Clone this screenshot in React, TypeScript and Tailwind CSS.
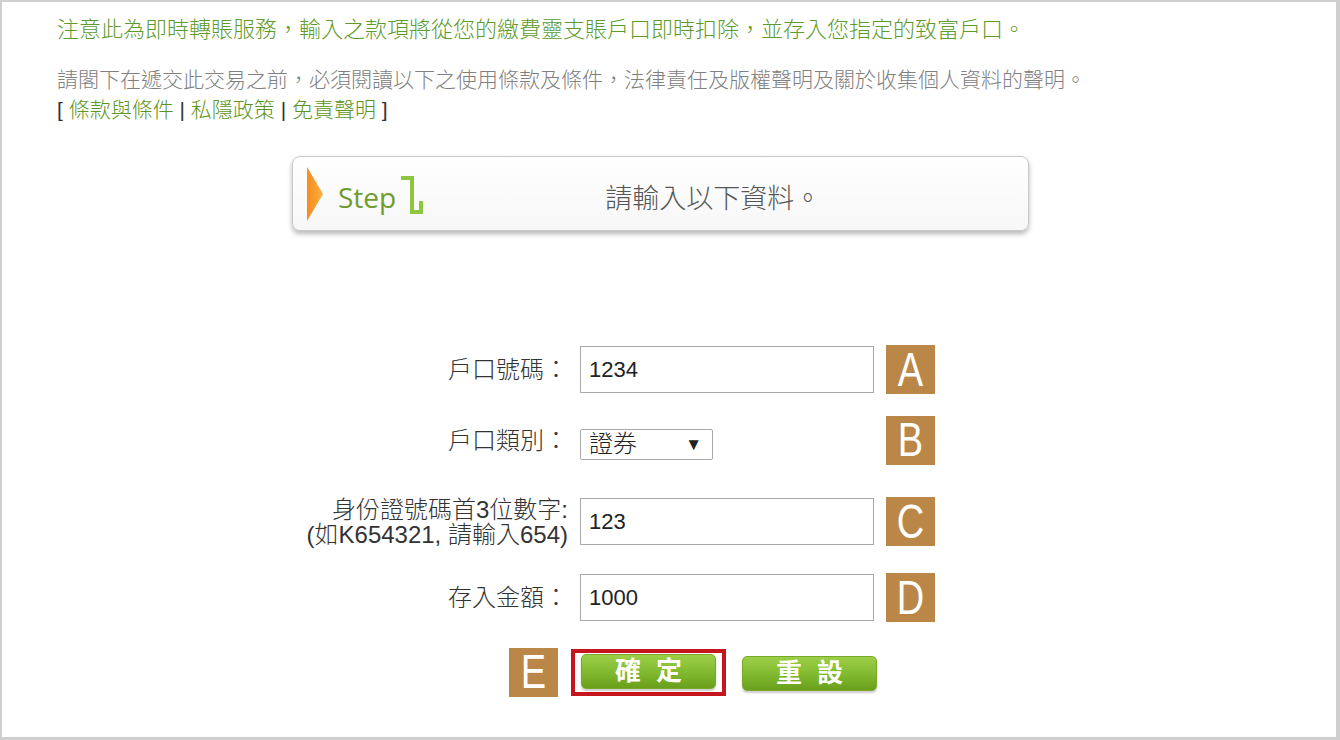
const cjk = { fontFamily: '"Liberation Sans", "Noto Sans CJK TC", sans-serif' };

const Badge: React.FC<{ letter: string }> = ({ letter }) => (
  <div className="flex h-[49px] w-[49px] shrink-0 items-center justify-center bg-[#bb8748] text-white">
    <span className="scale-y-[1.25] text-[38px] font-light leading-none" style={cjk}>
      {letter}
    </span>
  </div>
);

const GreenButton: React.FC<{ a: string; b: string }> = ({ a, b }) => (
  <button className="flex h-[35px] w-[135px] items-center justify-center gap-[15px] rounded-[5px] border border-[#7aa82a] bg-gradient-to-b from-[#9ccf48] via-[#82bb30] to-[#6a9f1c] text-[26px] font-bold leading-none text-white shadow-[0_2px_2px_rgba(0,0,0,0.2)]">
    <span>{a}</span>
    <span>{b}</span>
  </button>
);

const StepBox: React.FC = () => (
  <div className="ml-[290px] flex h-[75px] w-[737px] items-center rounded-[8px] border border-[#c9c9c9] bg-gradient-to-b from-white to-[#f7f7f7] shadow-[0_3px_5px_rgba(0,0,0,0.28)]">
    <svg width="16" height="54" viewBox="0 0 16 54" className="ml-[14px]">
      <defs>
        <linearGradient id="tri" x1="0" y1="0" x2="1" y2="0">
          <stop offset="0" stopColor="#f68b1f" />
          <stop offset="1" stopColor="#fbb040" />
        </linearGradient>
      </defs>
      <polygon points="0,0 16,27 0,54" fill="url(#tri)" />
    </svg>
    <span
      className="ml-[15px] mt-[6px] text-[28px] leading-none text-[#6f9b2f]"
      style={{ fontFamily: '"Open Sans", sans-serif' }}
    >
      Step
    </span>
    <svg width="26" height="42" viewBox="0 0 26 42" className="ml-[3px] mt-[2px]">
      <g fill="#8dc63f">
        <rect x="2" y="2" width="13" height="4" />
        <rect x="11" y="2" width="4" height="38" />
        <rect x="11" y="36" width="13" height="4" />
        <rect x="20" y="27" width="4" height="13" />
      </g>
    </svg>
    <span className="ml-[180px] mt-[12px] text-[27px] font-light leading-none text-[#555]" style={cjk}>
      請輸入以下資料。
    </span>
  </div>
);

const Label: React.FC<{ children: React.ReactNode }> = ({ children }) => (
  <div className="w-[305px] shrink-0 text-right text-[24px] font-light leading-[25px] text-[#333]" style={cjk}>
    {children}
  </div>
);

const TextBox: React.FC<{ value: string }> = ({ value }) => (
  <div className="ml-[12px] flex h-[47px] w-[294px] items-center border border-[#a9a9a9] bg-white pl-[8px] text-[22px] text-[#222]" style={cjk}>
    {value}
  </div>
);

export default function App() {
  return (
    <div className="box-border h-[740px] w-[1340px] overflow-hidden border-b-[3px] border-l-2 border-r-4 border-t-2 border-[#cfcfcf] bg-white">
      <div className="pl-[55px] font-light" style={cjk}>
        <p className="mt-[13px] text-[22px] leading-[30px] text-[#5d9b2d]">
          注意此為即時轉賬服務，輸入之款項將從您的繳費靈支賬戶口即時扣除，並存入您指定的致富戶口。
        </p>
        <p className="mt-[20px] text-[21px] leading-[30px] text-[#808080]">
          請閣下在遞交此交易之前，必須閱讀以下之使用條款及條件，法律責任及版權聲明及關於收集個人資料的聲明。
        </p>
        <p className="text-[21px] leading-[30px] text-[#333]">
          [ <span className="text-[#5e9420]">條款與條件</span> |{' '}
          <span className="text-[#5e9420]">私隱政策</span> |{' '}
          <span className="text-[#5e9420]">免責聲明</span> ]
        </p>
      </div>

      <div className="mt-[31px]">
        <StepBox />
      </div>

      <div className="pl-[261px]">
        <div className="mt-[114px] flex h-[49px] items-center">
          <Label>戶口號碼：</Label>
          <TextBox value="1234" />
          <div className="ml-[12px]">
            <Badge letter="A" />
          </div>
        </div>

        <div className="mt-[21px] flex h-[50px] items-center">
          <Label>戶口類別：</Label>
          <div className="ml-[12px] mt-[8px] flex h-[31px] w-[133px] items-center justify-between rounded-[2px] border border-[#a9a9a9] bg-white pl-[8px] pr-[10px] text-[24px] font-light leading-none text-[#222]" style={cjk}>
            <span>證券</span>
            <span className="text-[17px]">▼</span>
          </div>
          <div className="ml-[173px]">
            <Badge letter="B" />
          </div>
        </div>

        <div className="mt-[32px] flex h-[49px] items-center">
          <Label>
            身份證號碼首3位數字:
            <br />
            (如K654321, 請輸入654)
          </Label>
          <TextBox value="123" />
          <div className="ml-[12px]">
            <Badge letter="C" />
          </div>
        </div>

        <div className="mt-[27px] flex h-[49px] items-center">
          <Label>存入金額：</Label>
          <TextBox value="1000" />
          <div className="ml-[12px]">
            <Badge letter="D" />
          </div>
        </div>
      </div>

      <div className="mt-[25px] flex h-[50px] items-center pl-[507px]" style={cjk}>
        <Badge letter="E" />
        <div className="ml-[13px] flex h-[47px] w-[155px] items-end justify-center border-4 border-[#c6161d] pb-[3px]">
          <GreenButton a="確" b="定" />
        </div>
        <div className="ml-[16px] mt-[2px]">
          <GreenButton a="重" b="設" />
        </div>
      </div>
    </div>
  );
}
